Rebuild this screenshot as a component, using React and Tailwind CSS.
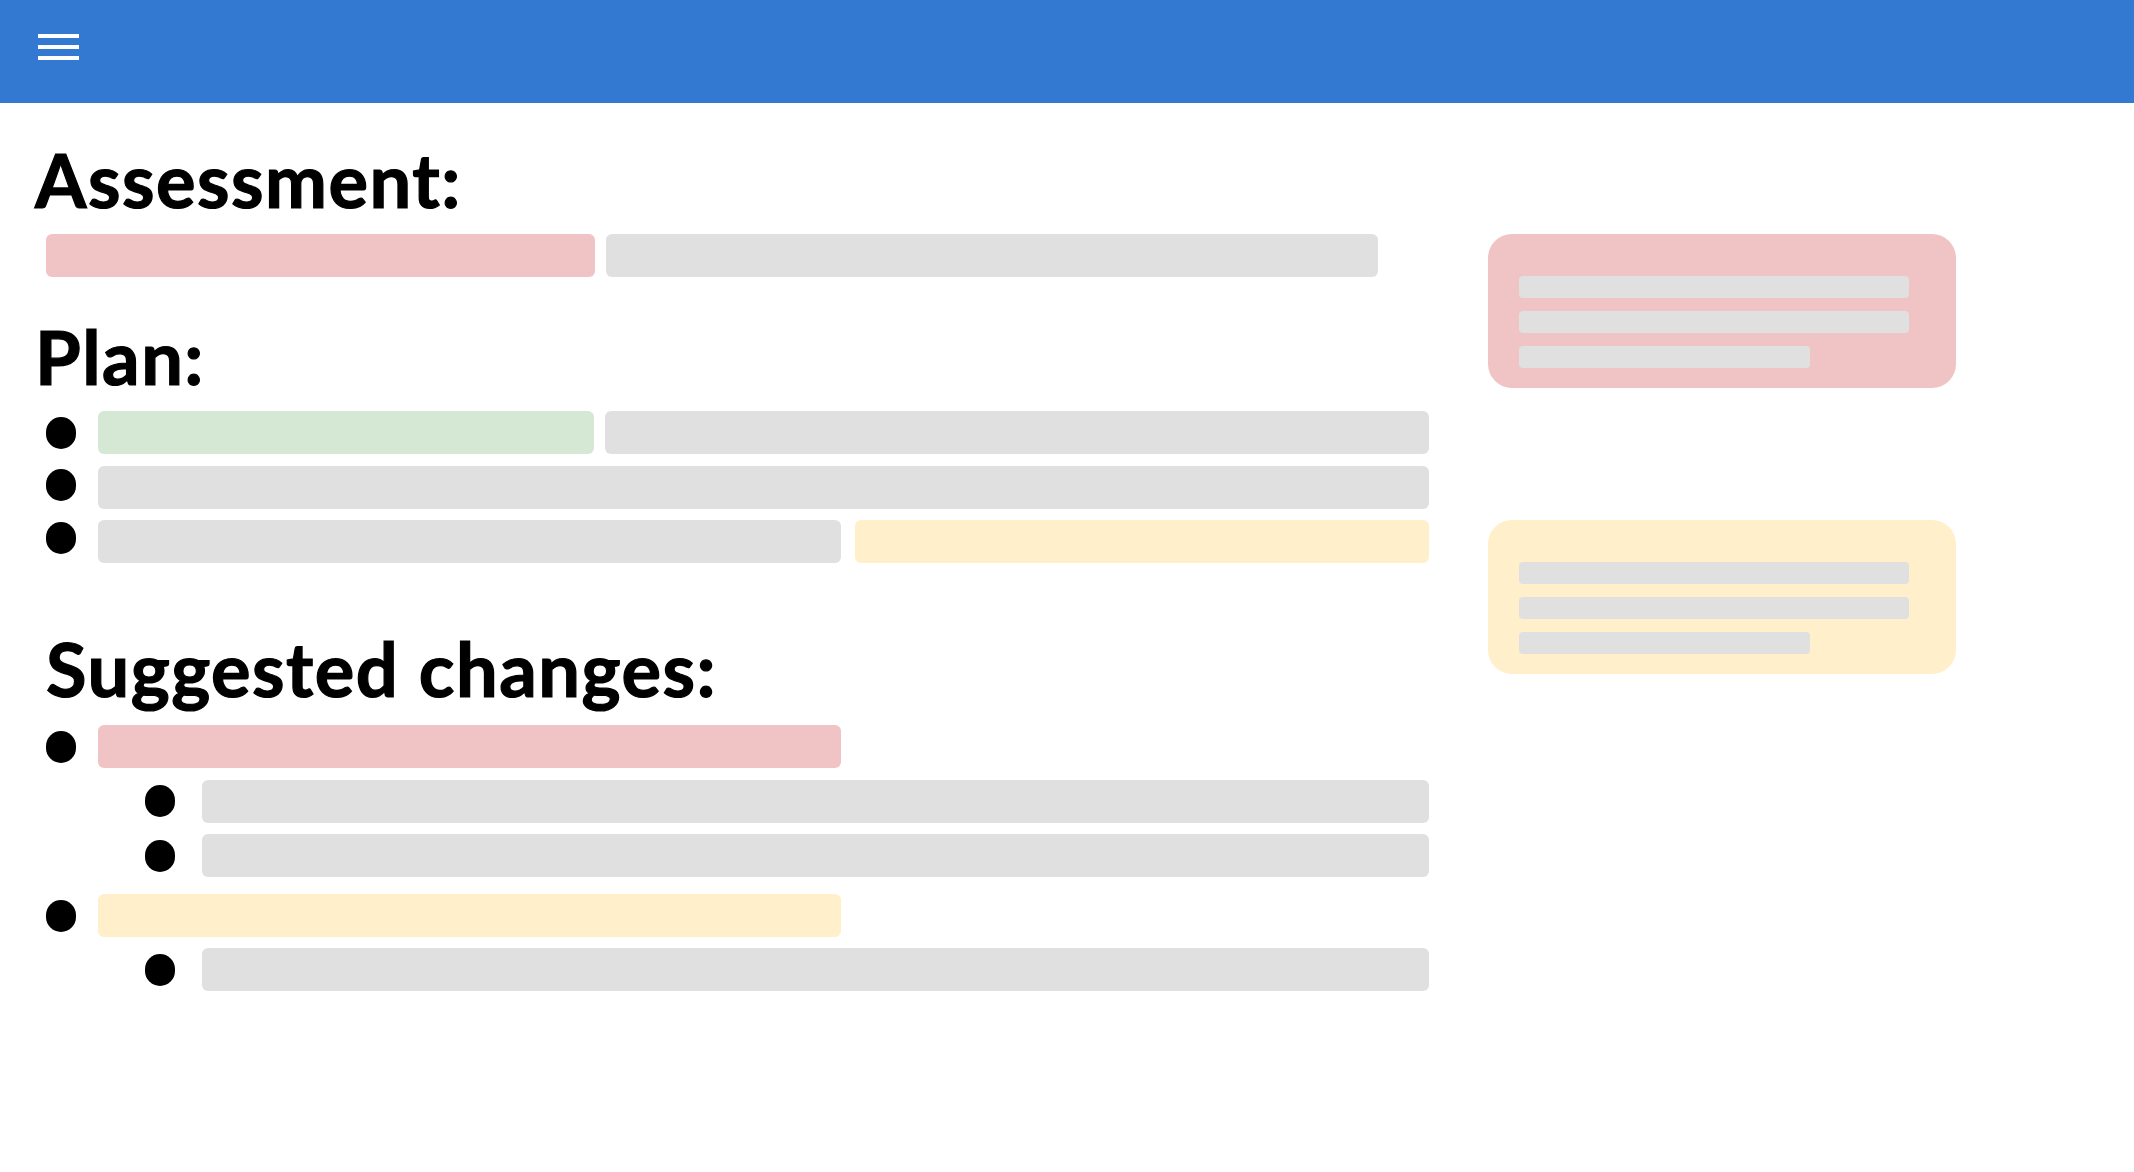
import React from "react";

function Bar({ className }) {
  return <div className={`h-[43px] rounded-[6px] ${className}`} />;
}

function Dot({ className = "" }) {
  return <div className={`w-[30px] h-[32px] rounded-full bg-black shrink-0 ${className}`} />;
}

function Card({ color }) {
  return (
    <div className={`w-[468px] h-[154px] rounded-[24px] ${color} pt-[42px] pl-[31px] flex flex-col gap-[13px]`}>
      <div className="w-[390px] h-[22px] rounded-[4px] bg-[#e0e0e0]" />
      <div className="w-[390px] h-[22px] rounded-[4px] bg-[#e0e0e0]" />
      <div className="w-[291px] h-[22px] rounded-[4px] bg-[#e0e0e0]" />
    </div>
  );
}

export default function App() {
  const heading =
    "text-[74px] leading-[74px] h-[74px] font-bold tracking-[1.5px] text-black whitespace-nowrap [-webkit-text-stroke:1.2px_black]";
  return (
    <div
      className="w-[2134px] h-[1172px] bg-white overflow-hidden"
      style={{ fontFamily: "Lato, 'Open Sans', sans-serif" }}
    >
      <header className="h-[103px] bg-[#3479d1] pl-[38px] pt-[34px]">
        <div className="flex flex-col gap-[7px] w-[41px]">
          <div className="h-[4px] bg-white" />
          <div className="h-[4px] bg-white" />
          <div className="h-[4px] bg-white" />
        </div>
      </header>

      <main className="flex">
        <section className="w-[1429px] shrink-0">
          <h1 className={`${heading} mt-[40px] pl-[35px]`}>Assessment:</h1>
          <div className="flex gap-[11px] ml-[46px] mt-[17px]">
            <Bar className="w-[549px] bg-[#f0c4c4]" />
            <Bar className="w-[772px] bg-[#e0e0e0]" />
          </div>

          <h1 className={`${heading} mt-[43px] pl-[35px]`}>Plan:</h1>
          <div className="flex flex-col gap-[11.5px] mt-[17px] pl-[46px]">
            <div className="flex items-center gap-[22px]">
              <Dot />
              <div className="flex gap-[11px] flex-1">
                <Bar className="w-[496px] bg-[#d5e8d4]" />
                <Bar className="flex-1 bg-[#e0e0e0]" />
              </div>
            </div>
            <div className="flex items-center gap-[22px]">
              <Dot className="mb-[4px]" />
              <Bar className="flex-1 bg-[#e0e0e0]" />
            </div>
            <div className="flex items-center gap-[22px]">
              <Dot className="mb-[8px]" />
              <div className="flex gap-[14px] flex-1">
                <Bar className="w-[743px] bg-[#e0e0e0]" />
                <Bar className="flex-1 bg-[#ffefca]" />
              </div>
            </div>
          </div>

          <h1 className={`${heading} mt-[69px] pl-[46px]`}>Suggested changes:</h1>
          <div className="flex flex-col mt-[19px] pl-[46px]">
            <div className="flex items-center gap-[22px]">
              <Dot />
              <Bar className="w-[743px] bg-[#f0c4c4]" />
            </div>
            <div className="flex flex-col gap-[11.5px] mt-[11.5px] pl-[99px]">
              <div className="flex items-center gap-[27px]">
                <Dot />
                <Bar className="flex-1 bg-[#e0e0e0]" />
              </div>
              <div className="flex items-center gap-[27px]">
                <Dot />
                <Bar className="flex-1 bg-[#e0e0e0]" />
              </div>
            </div>
            <div className="flex items-center gap-[22px] mt-[17px]">
              <Dot />
              <Bar className="w-[743px] bg-[#ffefca]" />
            </div>
            <div className="flex flex-col mt-[11px] pl-[99px]">
              <div className="flex items-center gap-[27px]">
                <Dot />
                <Bar className="flex-1 bg-[#e0e0e0]" />
              </div>
            </div>
          </div>
        </section>

        <aside className="ml-[59px] pt-[131px] flex flex-col gap-[132px]">
          <Card color="bg-[#f0c4c4]" />
          <Card color="bg-[#ffefca]" />
        </aside>
      </main>
    </div>
  );
}
